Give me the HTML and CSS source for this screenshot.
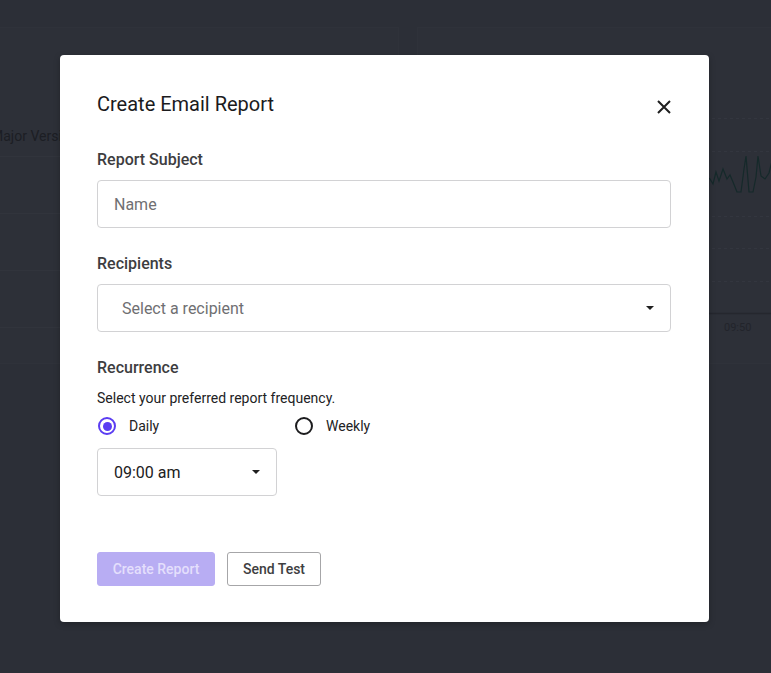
FILE: index.html
```html
<!DOCTYPE html>
<html lang="en">
<head>
<meta charset="utf-8">
<title>Create Email Report</title>
<link rel="stylesheet" href="styles.css">
</head>
<body>
<div class="dashboard">
  <section class="panel panel-left">
    <div class="panel-head">Major Version</div>
    <div class="row"></div>
    <div class="row"></div>
    <div class="row"></div>
    <div class="row"></div>
  </section>
  <section class="panel panel-right">
    <svg class="chart" width="400" height="340" viewBox="0 0 400 340">
      <g class="grid-lines">
        <line x1="0" y1="90.5" x2="400" y2="90.5"/>
        <line x1="0" y1="123.5" x2="400" y2="123.5"/>
        <line x1="0" y1="188.5" x2="400" y2="188.5"/>
        <line x1="0" y1="220.5" x2="400" y2="220.5"/>
        <line x1="0" y1="253.5" x2="400" y2="253.5"/>
      </g>
      <line class="axis" x1="0" y1="285.5" x2="400" y2="285.5"/>
      <polyline class="series" points="280,150 287,148 292,151 295,156 298,144 301,153 305,141 309,151 312,147 315,154 319,164 323,164 326,141 328,128 331,164 335,164 338,149 340,128 343,148 347,151 351,145 354,133 358,160"/>
      <text class="axis-label" x="306" y="303">09:50</text>
    </svg>
  </section>
</div>

<div class="modal" role="dialog" aria-labelledby="modal-title">
  <header class="modal-header">
    <h2 id="modal-title" class="modal-title">Create Email Report</h2>
    <button class="close" aria-label="Close">
      <svg width="14" height="14" viewBox="0 0 14 14"><path d="M1 1L13 13M13 1L1 13" stroke="#1f1f1f" stroke-width="2" fill="none"/></svg>
    </button>
  </header>

  <div class="field">
    <label class="label">Report Subject</label>
    <div class="input"><span class="placeholder">Name</span></div>
  </div>

  <div class="field">
    <label class="label">Recipients</label>
    <div class="input select"><span class="placeholder recipient">Select a recipient</span><span class="caret"></span></div>
  </div>

  <div class="field recurrence">
    <label class="label">Recurrence</label>
    <p class="hint">Select your preferred report frequency.</p>
    <div class="radios">
      <div class="radio"><span class="dot checked"></span><span>Daily</span></div>
      <div class="radio"><span class="dot"></span><span>Weekly</span></div>
    </div>
    <div class="input select time"><span class="value">09:00 am</span><span class="caret"></span></div>
  </div>

  <footer class="actions">
    <button class="btn btn-primary">Create Report</button>
    <button class="btn btn-secondary">Send Test</button>
  </footer>
</div>
</body>
</html>
```

FILE: styles.css
```css
html, body {
  margin: 0;
  padding: 0;
}
body {
  background: #2c2f37;
  font-family: Roboto, "Liberation Sans", Arial, sans-serif;
  width: 771px;
  height: 673px;
  overflow: hidden;
  position: relative;
}

/* backdrop dashboard */
.dashboard {
  display: grid;
  grid-template-columns: 420px 420px;
  column-gap: 18px;
  margin-left: -21px;
  padding-top: 27px;
}
.panel {
  background: #2d3038;
  border: 1px solid #2f323a;
  height: 335px;
  overflow: hidden;
}
.panel-head {
  height: 129px;
  display: flex;
  align-items: flex-end;
  padding-left: 11px;
  box-sizing: border-box;
  padding-bottom: 12px;
  font-size: 14px;
  color: #1c1e24;
  border-bottom: 1px solid #31343c;
  white-space: nowrap;
}
.row {
  height: 56px;
  border-bottom: 1px solid #31343c;
}
.chart {
  display: block;
}
.grid-lines line {
  stroke: #33363f;
  stroke-width: 1;
  stroke-dasharray: 3 3;
}
.axis {
  stroke: #25272e;
  stroke-width: 1.5;
}
.series {
  fill: none;
  stroke: #15292a;
  stroke-width: 1.2;
}
.axis-label {
  font-family: Roboto, "Liberation Sans", sans-serif;
  font-size: 11px;
  fill: #22242b;
}

/* modal */
.modal {
  position: absolute;
  left: 60px;
  top: 55px;
  width: 649px;
  height: 567px;
  box-sizing: border-box;
  background: #ffffff;
  border-radius: 4px;
  padding: 37px 38px 36px 37px;
  display: flex;
  flex-direction: column;
  box-shadow: 0 2px 6px rgba(0,0,0,0.25);
}
.modal-header {
  display: flex;
  justify-content: space-between;
  align-items: flex-start;
  height: 24px;
}
.modal-title {
  margin: 0;
  font-size: 20px;
  font-weight: 400;
  line-height: 24px;
  color: #1b1b1d;
}
.close {
  border: 0;
  background: none;
  padding: 0;
  margin-top: 8px;
  width: 14px;
  height: 14px;
  display: block;
}
.close svg { display: block; }

.field {
  display: flex;
  flex-direction: column;
  margin-top: 34px;
}
.field + .field { margin-top: 26px; }
.label {
  font-size: 16px;
  font-weight: 500;
  line-height: 20px;
  color: #3d3d40;
  margin-bottom: 10px;
}
.input {
  height: 48px;
  box-sizing: border-box;
  border: 1px solid #d2d2d4;
  border-radius: 4px;
  display: flex;
  align-items: center;
  padding: 0 16px;
  font-size: 16px;
}
.placeholder {
  color: #6f6f72;
}
.recipient {
  padding-left: 8px;
}
.select {
  justify-content: space-between;
  padding-right: 16px;
}
.caret {
  width: 0;
  height: 0;
  border-left: 4px solid transparent;
  border-right: 4px solid transparent;
  border-top: 4px solid #1f1f1f;
}
.recurrence .label { margin-bottom: 11px; }
.hint {
  margin: 0;
  font-size: 14px;
  line-height: 18px;
  color: #222224;
}
.radios {
  display: grid;
  grid-template-columns: 197px 1fr;
  margin-top: 9px;
  height: 20px;
}
.radio {
  display: flex;
  align-items: center;
  font-size: 14px;
  color: #222224;
  gap: 13px;
}
.dot {
  width: 18px;
  height: 18px;
  box-sizing: border-box;
  border: 2px solid #1c1c1e;
  border-radius: 50%;
  margin-left: 1px;
  display: flex;
  align-items: center;
  justify-content: center;
}
.dot.checked {
  border-color: #5b3df2;
}
.dot.checked::after {
  content: "";
  width: 9px;
  height: 9px;
  border-radius: 50%;
  background: #5b3df2;
}
.time {
  width: 180px;
  margin-top: 12px;
  color: #202022;
}

.actions {
  margin-top: auto;
  display: flex;
  gap: 12px;
}
.btn {
  height: 34px;
  box-sizing: border-box;
  font-family: Roboto, "Liberation Sans", Arial, sans-serif;
  font-size: 14px;
  font-weight: 500;
  border-radius: 3px;
  padding: 0;
  white-space: nowrap;
}
.btn-primary {
  background: #b8adf3;
  border: 1px solid #b8adf3;
  color: #e4dffc;
  width: 118px;
}
.btn-secondary {
  background: #ffffff;
  border: 1px solid #a6a6a8;
  color: #3e3e41;
  width: 94px;
}
```
